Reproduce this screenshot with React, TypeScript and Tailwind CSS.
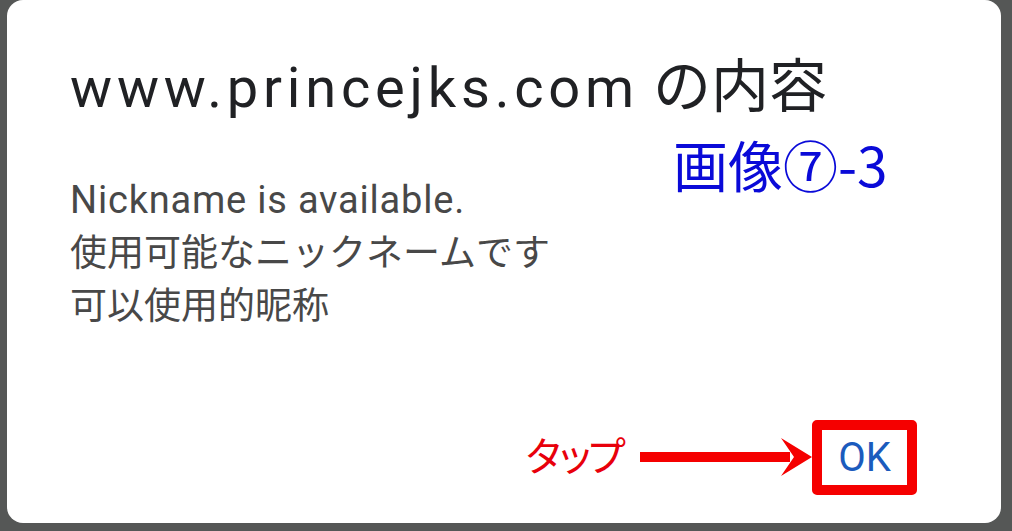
import React from "react";

const sans = "font-['Roboto','Noto_Sans_CJK_JP',sans-serif]";

const Arrow: React.FC = () => (
  <svg width="172" height="40" viewBox="0 0 172 40" className="block">
    <rect x="0" y="14" width="150" height="10" fill="#f50000" />
    <polygon points="172,19 141,0 154,19 141,38" fill="#f50000" />
  </svg>
);

export default function App() {
  return (
    <div className="h-[531px] w-[1012px] overflow-hidden bg-[#555756]">
      <div className="relative ml-[7px] h-[523px] w-[994px] rounded-[16px] bg-white">
        <div className={`${sans} flex h-full flex-col pl-[63px] pr-[84px] pt-[54px]`}>
          <h1 className="text-[56px] leading-[66px] text-[#202124]">
            <span className="tracking-[4.8px]">www.princejks.com</span>{" "}
            <span className="text-[58px]">の内容</span>
          </h1>

          <div className="mt-[53px] text-[37px] leading-[53px] text-[#484848]">
            <p className="text-[38px] tracking-[0.8px]">Nickname is available.</p>
            <p>使用可能なニックネームです</p>
            <p>可以使用的昵称</p>
          </div>

          <div className="mt-auto mb-[28px] flex items-center justify-end">
            <span className="text-[40px] leading-none tracking-[-9px] text-[#e8000b]">タップ</span>
            <div className="ml-[23px]">
              <Arrow />
            </div>
            <button className="flex h-[75px] w-[105px] items-center justify-center rounded-[5px] border-[10px] border-[#f50000] bg-white text-[40px] font-normal leading-none text-[#1b5bbd]">
              OK
            </button>
          </div>
        </div>

        <span className="absolute left-[666px] top-[131px] font-['Noto_Sans_CJK_JP',sans-serif] text-[55px] leading-[64px] text-[#0a0ad8]">
          画像⑦-3
        </span>
      </div>
    </div>
  );
}
